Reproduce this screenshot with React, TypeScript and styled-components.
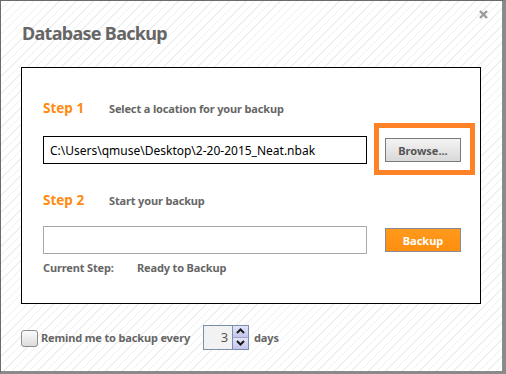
import React from 'react'
import styled, { createGlobalStyle } from 'styled-components'

const GlobalStyle = createGlobalStyle`
    html, body {
        margin: 0;
        padding: 0;
        background: #ffffff;
    }
    * {
        box-sizing: border-box;
    }
`

const SWindow = styled.div`
    position: relative;
    width: 506px;
    height: 374px;
    border-left: 1px solid #6b6b6b;
    border-top: 1px solid #6b6b6b;
    border-right: 4px solid #8a8a8a;
    border-bottom: 3px solid #8a8a8a;
    background: repeating-linear-gradient(135deg, #ffffff 0px, #ffffff 5px, #efefef 5px, #efefef 6px);
    padding: 0 0 0 20px;
    display: flex;
    flex-direction: column;
    font-family: 'Noto Sans', 'Open Sans', sans-serif;
`

const SClose = styled.div`
    position: absolute;
    top: 9px;
    right: 14px;
    width: 9px;
    height: 9px;
    display: flex;
`

const STitle = styled.div`
    margin: 20px 0 0 1px;
    height: 46px;
    font-size: 18px;
    font-weight: 700;
    letter-spacing: -0.7px;
    color: #666666;
`

const SPanel = styled.div`
    width: 460px;
    height: 237px;
    border: 1px solid #000000;
    background: #ffffff;
    padding: 29px 0 0 21px;
    display: flex;
    flex-direction: column;
`

const SStepRow = styled.div<{ $top?: number }>`
    display: flex;
    align-items: center;
    height: 22px;
    margin-top: ${(props) => props.$top ?? 0}px;
`

const SStepLabel = styled.div`
    width: 66px;
    font-size: 13.5px;
    font-weight: 700;
    color: #ff8a10;
`

const SLabel = styled.div<{ $width?: number }>`
    font-size: 11px;
    font-weight: 700;
    letter-spacing: -0.15px;
    color: #666666;
    ${(props) => (props.$width ? `width: ${props.$width}px;` : '')}
`

const SFieldRow = styled.div<{ $top: number }>`
    display: flex;
    align-items: center;
    gap: 18px;
    margin-top: ${(props) => props.$top}px;
`

const SField = styled.div<{ $dark?: boolean }>`
    width: 324px;
    height: 28px;
    border: 1px solid ${(props) => (props.$dark ? '#000000' : '#a8a8a8')};
    background: #ffffff;
    display: flex;
    align-items: center;
    padding-left: 6px;
    font-size: 12px;
    color: #000000;
    white-space: nowrap;
    overflow: hidden;
`

const SButtonWrap = styled.div`
    position: relative;
    display: flex;
`

const SHighlight = styled.div`
    position: absolute;
    left: -11px;
    right: -14px;
    top: -15px;
    bottom: -13px;
    border: 5px solid #ff8226;
    pointer-events: none;
`

const SButton = styled.div<{ $primary?: boolean }>`
    width: 76px;
    height: 24px;
    display: flex;
    align-items: center;
    justify-content: center;
    font-size: 11px;
    font-weight: 700;
    border: 1px solid ${(props) => (props.$primary ? '#8a8a96' : '#7a7a7a')};
    color: ${(props) => (props.$primary ? '#ffffff' : '#555555')};
    background: ${(props) =>
        props.$primary
            ? 'linear-gradient(#ff9a1c 0%, #ff8e10 100%)'
            : 'linear-gradient(#f4f4f4 0%, #e6e6e6 50%, #d9d9d9 100%)'};
`

const SStatusRow = styled.div`
    display: flex;
    align-items: center;
    margin-top: 6px;
`

const SFooter = styled.div`
    display: flex;
    align-items: center;
    margin-top: 20px;
    height: 26px;
`

const SCheckbox = styled.div`
    width: 17px;
    height: 17px;
    border: 1px solid #8c8c8c;
    border-radius: 3px;
    background: linear-gradient(#fbfbfb, #dcdcdc);
    margin: 2px 3px 0 0;
`

const SSpinner = styled.div`
    display: flex;
    height: 25px;
    margin: 0 5px 0 13px;
    border: 1px solid #7c8fa8;
`

const SSpinValue = styled.div`
    width: 28px;
    background: #f2f2f2;
    display: flex;
    align-items: center;
    justify-content: flex-end;
    padding-right: 4px;
    font-size: 13px;
    color: #555555;
`

const SSpinButtons = styled.div`
    display: flex;
    flex-direction: column;
    width: 16px;
    border-left: 1px solid #7c8fa8;
`

const SSpinButton = styled.div`
    flex: 1;
    display: flex;
    align-items: center;
    justify-content: center;
    background: linear-gradient(#e4e4fa, #c4c4ee);
    & + & {
        border-top: 1px solid #9ea6c8;
    }
`

const Chevron: React.FC<{ up?: boolean }> = ({ up }) => (
    <svg width="9" height="6" viewBox="0 0 9 6">
        <polyline
            points={up ? '1,5 4.5,1.5 8,5' : '1,1 4.5,4.5 8,1'}
            fill="none"
            stroke="#1a1a1a"
            strokeWidth="2"
        />
    </svg>
)

const App: React.FC = () => {
    return (
        <>
            <GlobalStyle />
            <SWindow>
                <SClose>
                    <svg width="9" height="9" viewBox="0 0 9 9">
                        <path d="M1 1 L8 8 M8 1 L1 8" stroke="#9a9a9a" strokeWidth="2.4" />
                    </svg>
                </SClose>
                <STitle>Database Backup</STitle>
                <SPanel>
                    <SStepRow>
                        <SStepLabel>Step 1</SStepLabel>
                        <SLabel>Select a location for your backup</SLabel>
                    </SStepRow>
                    <SFieldRow $top={17}>
                        <SField $dark>C:\Users\qmuse\Desktop\2-20-2015_Neat.nbak</SField>
                        <SButtonWrap>
                            <SButton>Browse...</SButton>
                            <SHighlight />
                        </SButtonWrap>
                    </SFieldRow>
                    <SStepRow $top={25}>
                        <SStepLabel>Step 2</SStepLabel>
                        <SLabel>Start your backup</SLabel>
                    </SStepRow>
                    <SFieldRow $top={15}>
                        <SField />
                        <SButton $primary>Backup</SButton>
                    </SFieldRow>
                    <SStatusRow>
                        <SLabel $width={94}>Current Step:</SLabel>
                        <SLabel>Ready to Backup</SLabel>
                    </SStatusRow>
                </SPanel>
                <SFooter>
                    <SCheckbox />
                    <SLabel>Remind me to backup every</SLabel>
                    <SSpinner>
                        <SSpinValue>3</SSpinValue>
                        <SSpinButtons>
                            <SSpinButton>
                                <Chevron up />
                            </SSpinButton>
                            <SSpinButton>
                                <Chevron />
                            </SSpinButton>
                        </SSpinButtons>
                    </SSpinner>
                    <SLabel>days</SLabel>
                </SFooter>
            </SWindow>
        </>
    )
}

export default App
